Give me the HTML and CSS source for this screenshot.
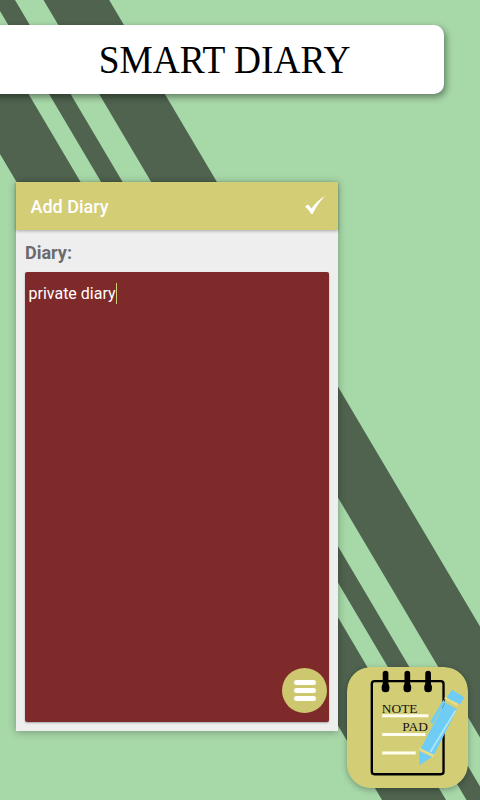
FILE: index.html
```html
<!DOCTYPE html>
<html lang="en">
<head>
<meta charset="utf-8">
<title>Smart Diary</title>
<link rel="stylesheet" href="styles.css">
</head>
<body>
<svg class="stripes" viewBox="0 0 480 800" aria-hidden="true">
  <polygon points="43.5,0 109.2,0 582.6,800 517,800"/>
  <polygon points="-6.5,0 15,0 488,800 466.5,800"/>
  <polygon points="-91,0 -27,0 446,800 382,800"/>
</svg>
<header class="banner"><h1 class="banner-title">SMART DIARY</h1></header>
<main class="panel">
  <div class="panel-bar">
    <span class="panel-title">Add Diary</span>
    <svg class="check" viewBox="0 0 20 18" aria-hidden="true"><path d="M0 10.5 L3 8.6 L6.6 12.4 C10 7.6 14.5 3 20 0 C15.5 4.6 11.5 10 7.6 18 L6 18 C4.6 15 2.6 12.6 0 10.5 Z"/></svg>
  </div>
  <div class="panel-body">
    <div class="field-label">Diary:</div>
    <div class="editor">
      <span class="editor-text">private diary</span><span class="caret"></span>
      <button class="fab" aria-label="Menu"><span></span><span></span><span></span></button>
    </div>
  </div>
</main>
<svg class="app-icon" viewBox="52 52 361 361" role="img" aria-label="Note pad">
  <rect x="52" y="52" width="361" height="361" rx="70" fill="#d3cd75"/>
  <rect x="126" y="94" width="214" height="278" rx="8" fill="none" stroke="#000" stroke-width="7"/>
  <g stroke="#000" stroke-linecap="round" fill="none">
    <path d="M167 72V112M232 72V112M294 72V112" stroke-width="17"/>
    <path d="M167 112V116M232 112V116M294 112V116" stroke-width="23"/>
  </g>
  <g fill="#fffdf0">
    <rect x="157" y="193" width="138" height="9"/>
    <rect x="157" y="249" width="129" height="9"/>
    <rect x="157" y="304" width="100" height="9"/>
  </g>
  <text class="icon-text" x="156" y="189">NOTE</text>
  <text class="icon-text" x="217" y="244">PAD</text>
  <polygon points="268,345 268,303 306,320" fill="#6fcdf5"/>
  <polygon points="266,298 270,292 314,313 308,321" fill="#e7dc8c"/>
  <polygon points="272,295 345,158 380,178 312,314" fill="#6fcdf5"/>
  <polygon points="299,303 374,180 378,183 303,306" fill="#b4e6f5"/>
  <polygon points="300,215 340,150 345,158 308,222" fill="#6fcdf5"/>
  <polygon points="342,146 346,140 384,162 380,170" fill="#e7dc8c"/>
  <polygon points="349,144 365,120 402,142 390,164" fill="#6fcdf5"/>
</svg>
</body>
</html>
```
FILE: styles.css
```css
* {
  box-sizing: border-box;
}

html,
body {
  height: 100%;
  margin: 0;
}

body {
  position: relative;
  overflow: hidden;
  background: #a7d8a8;
  font-family: Roboto, sans-serif;
}

.stripes {
  position: absolute;
  inset: 0;
  width: 480px;
  height: 800px;
  fill: #4f634f;
}

.banner {
  position: relative;
  display: flex;
  align-items: center;
  justify-content: center;
  width: 456px;
  height: 69px;
  margin: 25px 0 88px -12px;
  padding-left: 18px;
  background: #fff;
  border-radius: 10px;
  box-shadow: 2px 3px 7px rgba(0, 0, 0, 0.42);
}

.banner-title {
  margin: 0;
  font-family: "Liberation Serif", serif;
  font-size: 40px;
  font-weight: 400;
  color: #000;
  transform: scaleX(0.935);
}

.panel {
  position: relative;
  display: flex;
  flex-direction: column;
  width: 322px;
  height: 549px;
  margin-left: 16px;
  background: #eeeeee;
  box-shadow: 0 1px 8px rgba(0, 0, 0, 0.3);
}

.panel-bar {
  display: flex;
  align-items: center;
  justify-content: space-between;
  flex: none;
  height: 48px;
  padding: 0 13px 0 14.5px;
  background: #d3cd75;
  box-shadow: 0 1px 3px rgba(0, 0, 0, 0.3);
}

.panel-title {
  font-size: 18px;
  font-weight: 500;
  color: #fff;
}

.check {
  width: 20px;
  height: 18px;
  margin-top: -2px;
  fill: #fff;
}

.panel-body {
  display: flex;
  flex: 1;
  flex-direction: column;
  padding: 12px 9px 9px;
}

.field-label {
  height: 30px;
  font-size: 18px;
  font-weight: 700;
  line-height: 21px;
  color: #6b6b6b;
}

.editor {
  position: relative;
  flex: 1;
  padding: 11px 3.5px;
  background: #7f2a2a;
  border-radius: 2px;
  box-shadow: 0 1px 2px rgba(0, 0, 0, 0.3);
  line-height: 21px;
}

.editor-text {
  font-size: 16px;
  color: #fff;
}

.caret {
  display: inline-block;
  width: 1.5px;
  height: 21px;
  vertical-align: top;
  background: #d3cd75;
}

.fab {
  position: absolute;
  right: 2px;
  bottom: 9px;
  display: flex;
  flex-direction: column;
  align-items: center;
  justify-content: center;
  gap: 3.5px;
  width: 45px;
  height: 45px;
  padding: 0;
  border: 0;
  border-radius: 50%;
  background: #cdc76f;
}

.fab span {
  width: 22px;
  height: 4.5px;
  border-radius: 3px;
  background: #fff;
}

.app-icon {
  position: absolute;
  left: 347px;
  top: 667px;
  width: 121px;
  height: 121px;
  border-radius: 24px;
  box-shadow: 0 2px 6px rgba(0, 0, 0, 0.3);
}

.icon-text {
  font-family: "Liberation Serif", serif;
  font-size: 40px;
  fill: #111;
}
```
